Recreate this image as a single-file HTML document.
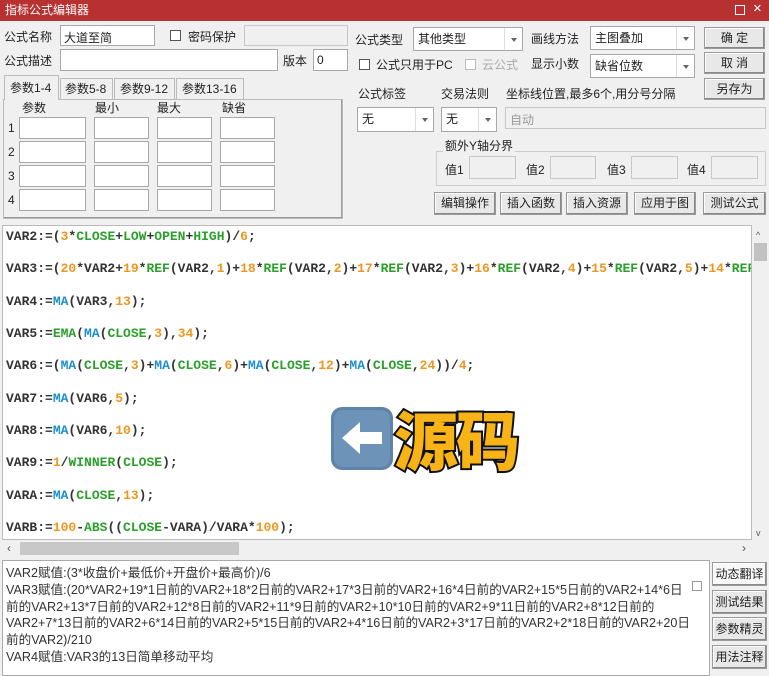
<!DOCTYPE html>
<html><head><meta charset="utf-8"><style>
*{box-sizing:border-box;margin:0;padding:0}
body{width:769px;height:676px;overflow:hidden;background:#f0f0f0;font-family:"Liberation Sans","Noto Sans CJK SC",sans-serif;font-size:12px;color:#222;position:relative}
.a{position:absolute}
.in{position:absolute;background:#fff;border:1px solid #a8a8a8}
.gr{position:absolute;background:#f0f0f0;border:1px solid #c8c8c8}
.lb{position:absolute;white-space:nowrap;line-height:14px}
.btn{position:absolute;background:#e8e8e8;border:1px solid #9a9a9a;box-shadow:inset -1px -1px 0 #888,inset 1px 1px 0 #fff;text-align:center;line-height:20px;font-size:12px}
.sel{position:absolute;background:#fff;border:1px solid #a8a8a8;padding-left:4px;line-height:22px}
.sel:after{content:"";position:absolute;right:0;top:0;bottom:0;width:17px;border-left:1px solid #ddd}
.sel i{position:absolute;right:5px;top:10px;border:3px solid transparent;border-top:4px solid #666;z-index:2}
.cb{position:absolute;width:11px;height:11px;border:1px solid #555;background:#fff}
#code{position:absolute;left:2px;top:225px;width:750px;height:315px;background:#fff;border:1px solid #bbb;overflow:hidden}
#code pre{font-family:"Liberation Mono",monospace;font-size:13px;font-weight:bold;line-height:16.15px;color:#333;position:absolute;left:3px;top:3px;white-space:pre}
.g{color:#2aa02a}.o{color:#ef9620}.b{color:#1a8fd2}
</style></head><body>
<div class="a" style="left:0;top:0;width:769px;height:21px;background:#b73131"></div>
<div class="lb" style="left:5px;top:3px;color:#fff;font-size:12px">指标公式编辑器</div>
<div class="a" style="left:735px;top:5px;width:10px;height:10px;border:1px solid #fff"></div>
<div class="lb" style="left:753px;top:2px;color:#fff;font-size:15px">×</div>

<div class="lb" style="left:4px;top:30px">公式名称</div>
<div class="in" style="left:60px;top:25px;width:95px;height:21px;padding:3px 3px">大道至简</div>
<div class="cb" style="left:170px;top:30px"></div>
<div class="lb" style="left:188px;top:30px">密码保护</div>
<div class="gr" style="left:244px;top:25px;width:104px;height:21px"></div>
<div class="lb" style="left:4px;top:54px">公式描述</div>
<div class="in" style="left:60px;top:49px;width:218px;height:22px"></div>
<div class="lb" style="left:283px;top:54px">版本</div>
<div class="in" style="left:313px;top:49px;width:35px;height:22px;padding:3px 3px">0</div>

<div class="lb" style="left:355px;top:33px">公式类型</div>
<div class="sel" style="left:413px;top:27px;width:110px;height:24px">其他类型<i></i></div>
<div class="lb" style="left:531px;top:32px">画线方法</div>
<div class="sel" style="left:590px;top:26px;width:105px;height:24px">主图叠加<i></i></div>
<div class="btn" style="left:704px;top:27px;width:61px;height:22px">确 定</div>
<div class="cb" style="left:359px;top:59px"></div>
<div class="lb" style="left:376px;top:58px">公式只用于PC</div>
<div class="cb" style="left:465px;top:59px;border-color:#bbb"></div>
<div class="lb" style="left:482px;top:58px;color:#aaa">云公式</div>
<div class="lb" style="left:531px;top:57px">显示小数</div>
<div class="sel" style="left:590px;top:54px;width:105px;height:24px">缺省位数<i></i></div>
<div class="btn" style="left:704px;top:52px;width:61px;height:22px">取 消</div>
<div class="btn" style="left:704px;top:78px;width:61px;height:22px">另存为</div>

<div class="a" style="left:3px;top:99px;width:340px;height:120px;border:1px solid #bbb;box-shadow:inset -1px -1px 0 #999"></div>
<div class="a" style="left:4px;top:75px;width:55px;height:25px;background:#f0f0f0;border:1px solid #bbb;border-bottom:none"></div>
<div class="lb" style="left:10px;top:81px">参数1-4</div>
<div class="a" style="left:60px;top:78px;width:53px;height:21px;border:1px solid #bbb;border-bottom:none"></div>
<div class="lb" style="left:65px;top:82px">参数5-8</div>
<div class="a" style="left:114px;top:78px;width:61px;height:21px;border:1px solid #bbb;border-bottom:none"></div>
<div class="lb" style="left:120px;top:82px">参数9-12</div>
<div class="a" style="left:176px;top:78px;width:68px;height:21px;border:1px solid #bbb;border-bottom:none"></div>
<div class="lb" style="left:182px;top:82px">参数13-16</div>
<div class="lb" style="left:22px;top:101px">参数</div>
<div class="lb" style="left:95px;top:101px">最小</div>
<div class="lb" style="left:157px;top:101px">最大</div>
<div class="lb" style="left:222px;top:101px">缺省</div>
<div class="lb" style="left:8px;top:121px">1</div><div class="lb" style="left:8px;top:145px">2</div><div class="lb" style="left:8px;top:169px">3</div><div class="lb" style="left:8px;top:193px">4</div>
<div class="in" style="left:19px;top:117px;width:67px;height:22px"></div><div class="in" style="left:94px;top:117px;width:55px;height:22px"></div><div class="in" style="left:157px;top:117px;width:55px;height:22px"></div><div class="in" style="left:220px;top:117px;width:55px;height:22px"></div>
<div class="in" style="left:19px;top:141px;width:67px;height:22px"></div><div class="in" style="left:94px;top:141px;width:55px;height:22px"></div><div class="in" style="left:157px;top:141px;width:55px;height:22px"></div><div class="in" style="left:220px;top:141px;width:55px;height:22px"></div>
<div class="in" style="left:19px;top:165px;width:67px;height:22px"></div><div class="in" style="left:94px;top:165px;width:55px;height:22px"></div><div class="in" style="left:157px;top:165px;width:55px;height:22px"></div><div class="in" style="left:220px;top:165px;width:55px;height:22px"></div>
<div class="in" style="left:19px;top:189px;width:67px;height:22px"></div><div class="in" style="left:94px;top:189px;width:55px;height:22px"></div><div class="in" style="left:157px;top:189px;width:55px;height:22px"></div><div class="in" style="left:220px;top:189px;width:55px;height:22px"></div>

<div class="lb" style="left:358px;top:87px">公式标签</div>
<div class="lb" style="left:441px;top:87px">交易法则</div>
<div class="lb" style="left:506px;top:87px">坐标线位置,最多6个,用分号分隔</div>
<div class="sel" style="left:357px;top:107px;width:77px;height:25px">无<i></i></div>
<div class="sel" style="left:441px;top:107px;width:56px;height:25px">无<i></i></div>
<div class="gr" style="left:505px;top:107px;width:261px;height:22px;color:#999;padding:3px 4px">自动</div>
<div class="a" style="left:436px;top:151px;width:330px;height:35px;border:1px solid #ccc"></div>
<div class="lb" style="left:443px;top:139px;background:#f0f0f0;padding:0 2px">额外Y轴分界</div>
<div class="lb" style="left:445px;top:163px">值1</div><div class="gr" style="left:469px;top:156px;width:47px;height:23px"></div>
<div class="lb" style="left:526px;top:163px">值2</div><div class="gr" style="left:550px;top:156px;width:46px;height:23px"></div>
<div class="lb" style="left:607px;top:163px">值3</div><div class="gr" style="left:631px;top:156px;width:47px;height:23px"></div>
<div class="lb" style="left:687px;top:163px">值4</div><div class="gr" style="left:711px;top:156px;width:47px;height:23px"></div>
<div class="btn" style="left:434px;top:192px;width:62px;height:23px">编辑操作</div>
<div class="btn" style="left:500px;top:192px;width:62px;height:23px">插入函数</div>
<div class="btn" style="left:566px;top:192px;width:62px;height:23px">插入资源</div>
<div class="btn" style="left:634px;top:192px;width:62px;height:23px">应用于图</div>
<div class="btn" style="left:703px;top:192px;width:63px;height:23px">测试公式</div>

<div id="code"><pre>VAR2:=(<span class="o">3</span>*<span class="g">CLOSE</span>+<span class="g">LOW</span>+<span class="g">OPEN</span>+<span class="g">HIGH</span>)/<span class="o">6</span>;

VAR3:=(<span class="o">20</span>*VAR2+<span class="o">19</span>*<span class="g">REF</span>(VAR2,<span class="o">1</span>)+<span class="o">18</span>*<span class="g">REF</span>(VAR2,<span class="o">2</span>)+<span class="o">17</span>*<span class="g">REF</span>(VAR2,<span class="o">3</span>)+<span class="o">16</span>*<span class="g">REF</span>(VAR2,<span class="o">4</span>)+<span class="o">15</span>*<span class="g">REF</span>(VAR2,<span class="o">5</span>)+<span class="o">14</span>*<span class="g">REF</span>

VAR4:=<span class="b">MA</span>(VAR3,<span class="o">13</span>);

VAR5:=<span class="g">EMA</span>(<span class="b">MA</span>(<span class="g">CLOSE</span>,<span class="o">3</span>),<span class="o">34</span>);

VAR6:=(<span class="b">MA</span>(<span class="g">CLOSE</span>,<span class="o">3</span>)+<span class="b">MA</span>(<span class="g">CLOSE</span>,<span class="o">6</span>)+<span class="b">MA</span>(<span class="g">CLOSE</span>,<span class="o">12</span>)+<span class="b">MA</span>(<span class="g">CLOSE</span>,<span class="o">24</span>))/<span class="o">4</span>;

VAR7:=<span class="b">MA</span>(VAR6,<span class="o">5</span>);

VAR8:=<span class="b">MA</span>(VAR6,<span class="o">10</span>);

VAR9:=<span class="o">1</span>/<span class="g">WINNER</span>(<span class="g">CLOSE</span>);

VARA:=<span class="b">MA</span>(<span class="g">CLOSE</span>,<span class="o">13</span>);

VARB:=<span class="o">100</span>-<span class="g">ABS</span>((<span class="g">CLOSE</span>-VARA)/VARA*<span class="o">100</span>);</pre></div>
<div class="a" style="left:752px;top:225px;width:17px;height:315px;background:#f0f0f0"></div>
<div class="a" style="left:754px;top:243px;width:13px;height:18px;background:#c2c2c2"></div>
<div class="lb" style="left:756px;top:228px;font-size:9px;color:#555">^</div>
<div class="lb" style="left:756px;top:526px;font-size:9px;color:#555">v</div>
<div class="a" style="left:2px;top:540px;width:767px;height:17px;background:#f0f0f0"></div>
<div class="a" style="left:20px;top:542px;width:219px;height:13px;background:#c8c8c8"></div>
<div class="lb" style="left:7px;top:541px;color:#555">‹</div>
<div class="lb" style="left:742px;top:541px;color:#555">›</div>

<div class="a" style="left:2px;top:560px;width:708px;height:116px;background:#fff;border:1px solid #aaa"></div>
<div class="a" style="left:6px;top:565px;width:700px;line-height:16.8px;font-size:12.6px;color:#333;white-space:nowrap">VAR2赋值:(3*收盘价+最低价+开盘价+最高价)/6<br>VAR3赋值:(20*VAR2+19*1日前的VAR2+18*2日前的VAR2+17*3日前的VAR2+16*4日前的VAR2+15*5日前的VAR2+14*6日<br>前的VAR2+13*7日前的VAR2+12*8日前的VAR2+11*9日前的VAR2+10*10日前的VAR2+9*11日前的VAR2+8*12日前的<br>VAR2+7*13日前的VAR2+6*14日前的VAR2+5*15日前的VAR2+4*16日前的VAR2+3*17日前的VAR2+2*18日前的VAR2+20日<br>前的VAR2)/210<br>VAR4赋值:VAR3的13日简单移动平均</div>
<div class="cb" style="left:692px;top:581px;border-color:#999;width:10px;height:10px"></div>
<div class="btn" style="left:712px;top:562px;width:55px;height:24px;line-height:22px;background:#f8f8f8">动态翻译</div>
<div class="btn" style="left:712px;top:590px;width:55px;height:24px;line-height:22px">测试结果</div>
<div class="btn" style="left:712px;top:617px;width:55px;height:24px;line-height:22px">参数精灵</div>
<div class="btn" style="left:712px;top:645px;width:55px;height:24px;line-height:22px">用法注释</div>

<svg class="a" style="left:330px;top:406px" width="66" height="66" viewBox="0 0 66 66">
<rect x="1" y="1" width="62" height="63" rx="11" fill="#5f84a8"/>
<rect x="4" y="4" width="56" height="57" rx="9" fill="#6d93b8"/>
<path d="M12 32 L30 16 L30 26 L52 26 L52 38 L30 38 L30 48 Z" fill="#fff"/>
</svg>
<div class="lb" style="left:394px;top:400px;font-size:64px;line-height:76px;font-weight:900;color:#f8b417;-webkit-text-stroke:4px #111;paint-order:stroke fill;font-family:'Noto Sans CJK SC',sans-serif;letter-spacing:-2px">源码</div>
</body></html>
